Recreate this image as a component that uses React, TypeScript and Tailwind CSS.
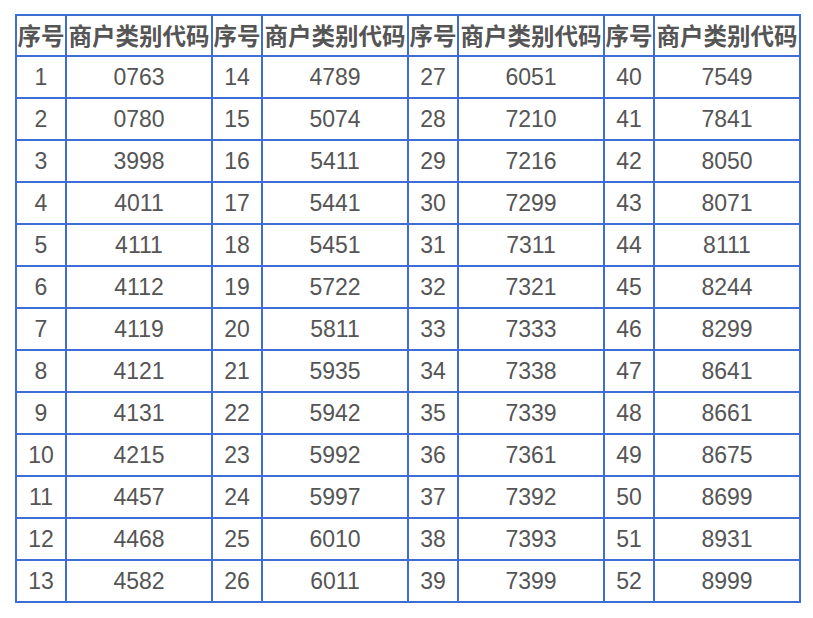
import React from "react";

const codes = [
  "0763","0780","3998","4011","4111","4112","4119","4121","4131","4215","4457","4468","4582",
  "4789","5074","5411","5441","5451","5722","5811","5935","5942","5992","5997","6010","6011",
  "6051","7210","7216","7299","7311","7321","7333","7338","7339","7361","7392","7393","7399",
  "7549","7841","8050","8071","8111","8244","8299","8641","8661","8675","8699","8931","8999",
];

export default function App() {
  const cells: React.ReactNode[] = [];
  for (let g = 0; g < 4; g++) {
    cells.push(
      <div key={`h1-${g}`} className="h-[41px] border-r-2 border-b-2 border-[#3d6dd5] flex items-center justify-center font-bold text-[23.5px] text-[#555]" style={{ fontFamily: '"Noto Sans CJK SC", sans-serif' }}>
        序号
      </div>
    );
    cells.push(
      <div key={`h2-${g}`} className="h-[41px] border-r-2 border-b-2 border-[#3d6dd5] flex items-center justify-center font-bold text-[23.5px] text-[#555]" style={{ fontFamily: '"Noto Sans CJK SC", sans-serif' }}>
        商户类别代码
      </div>
    );
  }
  for (let r = 0; r < 13; r++) {
    for (let g = 0; g < 4; g++) {
      const idx = g * 13 + r;
      cells.push(
        <div key={`n-${r}-${g}`} className="h-[42px] border-r-2 border-b-2 border-[#3d6dd5] flex items-center justify-center text-[23px] text-[#555] font-['Liberation_Sans',Arial,sans-serif]">
          {idx + 1}
        </div>
      );
      cells.push(
        <div key={`c-${r}-${g}`} className="h-[42px] border-r-2 border-b-2 border-[#3d6dd5] flex items-center justify-center text-[23px] text-[#555] font-['Liberation_Sans',Arial,sans-serif]">
          {codes[idx]}
        </div>
      );
    }
  }
  return (
    <div className="w-[813px] h-[618px] bg-white pt-[14px] pl-[15px]">
      <div className="inline-grid grid-cols-[50px_146px_50px_146px_50px_146px_50px_146px] border-l-2 border-t-2 border-[#3d6dd5]">
        {cells}
      </div>
    </div>
  );
}
